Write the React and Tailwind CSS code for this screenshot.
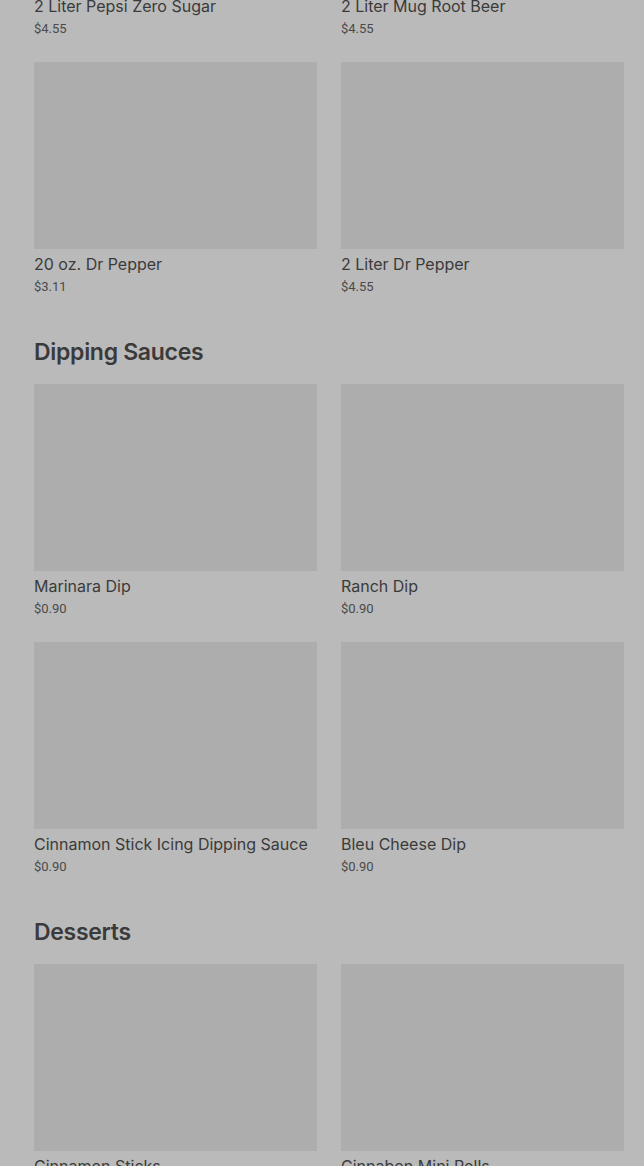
const sections = [
  {
    title: null,
    items: [
      { name: "2 Liter Pepsi Zero Sugar", price: "$4.55" },
      { name: "2 Liter Mug Root Beer", price: "$4.55" },
      { name: "20 oz. Dr Pepper", price: "$3.11" },
      { name: "2 Liter Dr Pepper", price: "$4.55" },
    ],
  },
  {
    title: "Dipping Sauces",
    items: [
      { name: "Marinara Dip", price: "$0.90" },
      { name: "Ranch Dip", price: "$0.90" },
      { name: "Cinnamon Stick Icing Dipping Sauce", price: "$0.90" },
      { name: "Bleu Cheese Dip", price: "$0.90" },
    ],
  },
  {
    title: "Desserts",
    items: [
      { name: "Cinnamon Sticks", price: "$2.99" },
      { name: "Cinnabon Mini Rolls", price: "$4.99" },
    ],
  },
];

function Item({ item }) {
  return (
    <div className="flex flex-col">
      <div className="h-[187px] w-full bg-[#adadad]" />
      <div className="mt-[4px] truncate text-[16px] leading-[22px] text-[#3b3b3b] font-['Inter',sans-serif]">
        {item.name}
      </div>
      <div className="mt-[3px] text-[13px] leading-[18px] text-[#4a4a4a] font-['Roboto',sans-serif]">
        {item.price}
      </div>
    </div>
  );
}

export default function App() {
  return (
    <div className="h-[1166px] w-full overflow-hidden bg-[#bababa]">
      <div className="mt-[-196px] pl-[34px] pr-[20px]">
        {sections.map((s, i) => (
          <section key={i} className={i > 0 ? "mt-[40px]" : ""}>
            {s.title && (
              <h2 className="mb-[16px] text-[23px] leading-[32px] font-semibold tracking-[-0.3px] text-[#3a3a3a] font-['Inter',sans-serif]">
                {s.title}
              </h2>
            )}
            <div className="grid grid-cols-2 gap-x-6 gap-y-[24px]">
              {s.items.map((item) => (
                <Item key={item.name} item={item} />
              ))}
            </div>
          </section>
        ))}
      </div>
    </div>
  );
}
